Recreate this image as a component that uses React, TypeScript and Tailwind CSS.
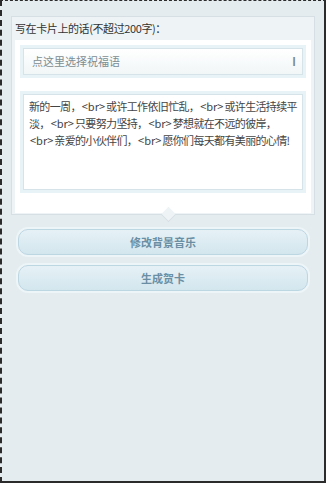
import React from "react";

const font = { fontFamily: '"Noto Sans CJK SC", "Noto Sans", sans-serif' };

// the message as it wraps inside the textarea
const lines = [
  "新的一周，<br>或许工作依旧忙乱，<br>或许生活持续平",
  "淡，<br>只要努力坚持，<br>梦想就在不远的彼岸，",
  "<br>亲爱的小伙伴们，<br>愿你们每天都有美丽的心情!",
];

const PillButton: React.FC<{ label: string }> = ({ label }) => (
  <div className="rounded-[12px] bg-[#eef5f8] p-[2px]">
    <button
      type="button"
      className="flex h-[26px] w-full items-center justify-center rounded-[10px] border border-[#bcd6e2] bg-gradient-to-b from-[#e6f1f6] to-[#d3e6ee] text-[11px] font-bold text-[#6a8fa4]"
    >
      {label}
    </button>
  </div>
);

const App: React.FC = () => {
  return (
    <div
      className="h-[483px] w-[326px] border-t border-l-2 border-dashed border-[#2b2b2b] bg-[#e4ecef]"
      style={font}
    >
      <div className="h-full border-r-2 border-b-2 border-solid border-[#2b2b2b] px-[9px] pt-[15px]">
        {/* card */}
        <div className="relative border border-[#d6e0e4] bg-[#eef4f6] px-[3px] pb-[1px]">
          <p className="pt-[4px] pb-[5px] text-[11px] leading-[14px] tracking-[-0.4px] text-[#333]">
            写在卡片上的话(不超过200字)：
          </p>
          <div className="bg-white px-[5px] pt-[5px] pb-[20px]">
            <div className="bg-[#e8f3f7] p-[3px]">
              <div className="flex h-[27px] items-center justify-between border border-[#d6e3e8] bg-gradient-to-b from-white to-[#f1f6f7] pr-[6px] pl-[8px]">
                <span className="text-[11px] text-[#7d8d92]">点这里选择祝福语</span>
                <span className="text-[11px] font-bold text-[#7b8a8f]">Ι</span>
              </div>
            </div>
            <div className="mt-[13px] bg-[#e8f3f7] p-[3px]">
              <div className="h-[96px] overflow-hidden border border-[#d6e3e8] bg-white pt-[3px] pl-[5px] text-[11px] leading-[17px] tracking-[-0.65px] text-[#444]">
                {lines.map((line, i) => (
                  <div key={i} className="whitespace-nowrap">
                    {line.split("<br>").map((p, j) => (
                      <React.Fragment key={j}>
                        {j > 0 && <span className="px-[1px] tracking-[0px]">{"<br>"}</span>}
                        {p}
                      </React.Fragment>
                    ))}
                  </div>
                ))}
              </div>
            </div>
          </div>
          {/* notch */}
          <div className="absolute -bottom-[6px] left-[151px] h-[11px] w-[11px] rotate-45 border-r border-b border-[#d6e0e4] bg-[#eef4f6]" />
        </div>

        <div className="mt-[12px] flex flex-col gap-[6px] px-[5px]">
          <PillButton label="修改背景音乐" />
          <PillButton label="生成贺卡" />
        </div>
      </div>
    </div>
  );
};

export default App;
